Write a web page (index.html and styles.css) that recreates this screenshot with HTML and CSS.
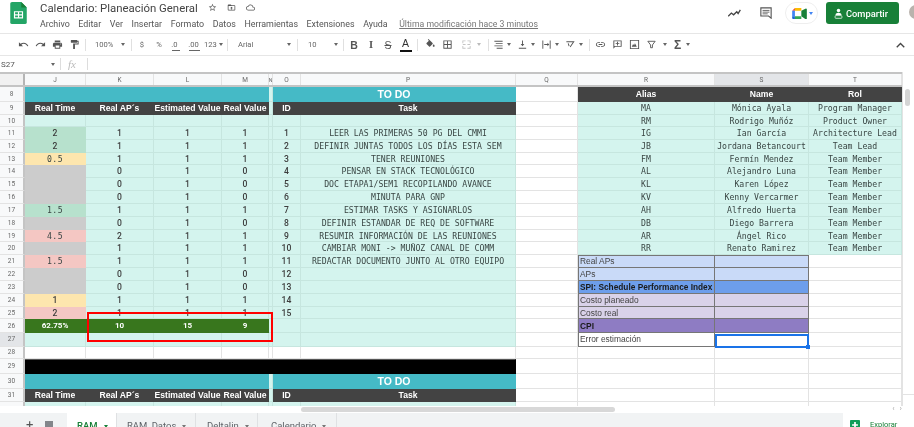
FILE: index.html
```html
<!DOCTYPE html>
<html lang="es">
<head>
<meta charset="utf-8">
<title>Calendario: Planeación General</title>
<link rel="stylesheet" href="styles.css">
</head>
<body>
<div class="app">
  <header class="top">
    <svg class="logo" viewBox="0 0 18 24"><path fill="#23a566" d="M2 0h10l6 6v16a2 2 0 0 1-2 2H2a2 2 0 0 1-2-2V2a2 2 0 0 1 2-2z"/><path fill="#188038" d="M12 0l6 6h-6z"/><path fill="#fff" d="M4 10h10v8H4zm1.300 1.300v2.100h3.100v-2.100zm4.400 0v2.100h3v-2.100zm-4.400 3.300v2.100h3.100v-2.100zm4.400 0v2.100h3v-2.100z" fill-rule="evenodd"/></svg>
    <div class="titles">
      <div class="title-line">
        <span class="doc-title">Calendario: Planeación General</span>
        <svg class="ti first" viewBox="0 0 24 24"><path d="M22 9.240l-7.190-.62L12 2 9.190 8.630 2 9.240l5.460 4.730L5.820 21 12 17.270 18.180 21l-1.630-7.030L22 9.240zM12 15.400l-3.760 2.270 1-4.280-3.320-2.880 4.380-.38L12 6.100l1.710 4.040 4.380.38-3.320 2.880 1 4.280L12 15.400z"/></svg>
        <svg class="ti" viewBox="0 0 24 24"><path d="M20 6h-8l-2-2H4c-1.100 0-2 .9-2 2v12c0 1.100.9 2 2 2h16c1.100 0 2-.9 2-2V8c0-1.100-.9-2-2-2zm0 12H4V8h16v10zM11 17h2v-3h3l-4-4-4 4h3z"/></svg>
        <svg class="ti" viewBox="0 0 24 24"><path d="M19.350 10.040C18.670 6.590 15.640 4 12 4 9.110 4 6.600 5.640 5.350 8.040 2.340 8.360 0 10.910 0 14c0 3.310 2.690 6 6 6h13c2.760 0 5-2.240 5-5 0-2.640-2.050-4.780-4.650-4.960zM19 18H6c-2.210 0-4-1.790-4-4s1.790-4 4-4h.71C7.370 7.690 9.480 6 12 6c3.040 0 5.500 2.460 5.500 5.500v.5H19c1.660 0 3 1.340 3 3s-1.340 3-3 3z"/></svg>
      </div>
      <nav class="menu">
        <span>Archivo</span><span>Editar</span><span>Ver</span><span>Insertar</span><span>Formato</span><span>Datos</span><span>Herramientas</span><span>Extensiones</span><span>Ayuda</span><span class="last-edit">Última modificación hace 3 minutos</span>
      </nav>
    </div>
    <div class="top-actions">
      <svg class="trend" viewBox="0 0 14 10"><path fill="none" stroke="#444" stroke-width="1.500" d="M0 8l3.500-3.500 2.500 2L9.500 3 11 5l2.500-4"/></svg>
      <svg class="chat" viewBox="0 0 14 14"><path fill="none" stroke="#555" stroke-width="1.300" d="M1 1h12v12l-3-2.500H1z"/><path stroke="#555" d="M3 4h8M3 6h8M3 8h6"/></svg>
      <div class="meet">
        <svg viewBox="0 0 16 12" class="meet-icon"><path fill="#ea4335" d="M0 3l3-3v3z"/><path fill="#4285f4" d="M0 3h3v6H0z"/><path fill="#fbbc04" d="M3 0h7v3H3z"/><path fill="#188038" d="M10 3v6l5 3.500a1 1 0 0 0 1-1V1a1 1 0 0 0-1-.5z"/><path fill="#34a853" d="M3 9h7v3H3z"/><path fill="#1967d2" d="M0 9h3v3H1a1 1 0 0 1-1-1z"/></svg>
        <span class="meet-caret"></span>
      </div>
      <button class="share">
        <svg viewBox="0 0 12 14"><circle cx="6" cy="3" r="2.300" fill="#fff"/><path fill="#fff" d="M2 9c0-2 2-3 4-3s4 1 4 3z"/><rect x="1.500" y="9.800" width="9" height="3.600" rx=".8" fill="none" stroke="#fff"/></svg>
        Compartir
      </button>
      <span class="avatar"></span>
    </div>
  </header>

  <div class="toolbar">
    <svg class="i" viewBox="0 0 24 24"><path d="M12.500 8c-2.650 0-5.050.99-6.900 2.600L2 7v9h9l-3.620-3.620c1.390-1.160 3.160-1.880 5.120-1.880 3.540 0 6.550 2.310 7.600 5.500l2.370-.78C21.080 11.030 17.150 8 12.500 8z"/></svg>
    <svg class="i" viewBox="0 0 24 24"><path d="M18.400 10.600C16.550 8.990 14.150 8 11.500 8c-4.650 0-8.580 3.030-9.960 7.220L3.900 16c1.050-3.190 4.050-5.500 7.600-5.500 1.950 0 3.730.72 5.120 1.880L13 16h9V7l-3.600 3.600z"/></svg>
    <svg class="i" viewBox="0 0 24 24"><path d="M19 8H5c-1.660 0-3 1.340-3 3v6h4v4h12v-4h4v-6c0-1.660-1.340-3-3-3zm-3 11H8v-5h8v5zm3-7c-.55 0-1-.45-1-1s.45-1 1-1 1 .45 1 1-.45 1-1 1zm-1-9H6v4h12V3z"/></svg>
    <svg class="i" viewBox="0 0 24 24"><path d="M18 4V3c0-.55-.45-1-1-1H5c-.55 0-1 .45-1 1v4c0 .55.45 1 1 1h12c.55 0 1-.45 1-1V6h1v4H9v11c0 .55.45 1 1 1h2c.55 0 1-.45 1-1v-9h8V4h-3z"/></svg>
    <span class="sep s1"></span>
    <span class="txt w-zoom">100%</span><span class="caret"></span>
    <span class="sep s2"></span>
    <span class="txt w-cur">$</span>
    <span class="txt w-cur">%</span>
    <span class="txt w-dec dec-a">.0<u></u></span>
    <span class="txt w-dec dec-b">.00<u></u></span>
    <span class="txt w-123">123</span><span class="caret c-tight"></span>
    <span class="sep s3"></span>
    <span class="txt w-font">Arial</span><span class="caret"></span>
    <span class="sep s4"></span>
    <span class="txt w-size">10</span><span class="caret"></span>
    <span class="sep s5"></span>
    <b class="fmt f-b">B</b><i class="fmt f-i">I</i><s class="fmt f-s">S</s><span class="fmt f-a">A</span>
    <span class="sep s6"></span>
    <svg class="i fill" viewBox="0 0 24 24"><path d="M16.560 8.940L7.620 0 6.210 1.410l2.380 2.380-5.150 5.150c-.59.59-.59 1.540 0 2.120l5.500 5.500c.29.29.68.44 1.060.44s.77-.15 1.060-.44l5.500-5.500c.59-.58.59-1.530 0-2.120zM19 11.500s-2 2.170-2 3.500c0 1.100.9 2 2 2s2-.9 2-2c0-1.330-2-3.500-2-3.500z"/></svg>
    <svg class="i" viewBox="0 0 24 24"><path d="M3 3v18h18V3H3zm8 16H5v-6h6v6zm0-8H5V5h6v6zm8 8h-6v-6h6v6zm0-8h-6V5h6v6z"/></svg>
    <svg class="i merge" viewBox="0 0 24 24"><path d="M3 3h7v2H5v4H3zm11 0h7v6h-2V5h-5zM3 15h2v4h5v2H3zm16 0h2v6h-7v-2h5zM4 11h6v2H4zm10 0h6v2h-6z"/></svg><span class="caret c-faint"></span>
    <span class="sep s7"></span>
    <svg class="i" viewBox="0 0 24 24"><path d="M3 4h18v2H3zm3 5h15v2H6zM3 14h18v2H3zm5 5h13v2H8z"/></svg><span class="caret c-tight"></span>
    <svg class="i" viewBox="0 0 24 24"><path d="M4 19h16v2H4zM13 3v8h3l-4 5-4-5h3V3z"/></svg><span class="caret c-tight"></span>
    <svg class="i" viewBox="0 0 24 24"><path d="M3 3h2v18H3zm16 0h2v18h-2zM7 11h7V8l4 4-4 4v-3H7z"/></svg><span class="caret c-tight"></span>
    <svg class="i" viewBox="0 0 24 24"><path d="M3 5h18l-9 13-1.600-1.100L17 7H3zM8 9l2 6-2 .6-2-6z"/></svg><span class="caret c-tight"></span>
    <span class="sep s8"></span>
    <svg class="i" viewBox="0 0 24 24"><path d="M3.900 12c0-1.710 1.390-3.100 3.100-3.100h4V7H7c-2.760 0-5 2.240-5 5s2.240 5 5 5h4v-1.900H7c-1.710 0-3.100-1.390-3.100-3.100zM8 13h8v-2H8v2zm9-6h-4v1.900h4c1.710 0 3.100 1.390 3.100 3.100s-1.390 3.100-3.100 3.100h-4V17h4c2.760 0 5-2.240 5-5s-2.240-5-5-5z"/></svg>
    <svg class="i" viewBox="0 0 24 24"><path d="M3 3h18v14H7l-4 4zm2 2v11l1-1h13V5zm6 1h2v3h3v2h-3v3h-2v-3H8V9h3z" fill-rule="evenodd"/></svg>
    <svg class="i" viewBox="0 0 24 24"><path d="M2 2h20v20H2zm2 2v16h16V4zm2 13l3-6 2 3 2-5 4 8z" fill-rule="evenodd"/></svg>
    <svg class="i filter" viewBox="0 0 24 24"><path fill="none" stroke="#555" stroke-width="2" d="M4 5h16l-6 8v6h-4v-6z"/></svg><span class="caret c-gap"></span>
    <span class="sigma">Σ</span><span class="caret c-tight"></span>
    <svg class="collapse" viewBox="0 0 12 8"><path fill="none" stroke="#444" stroke-width="1.800" d="M1 7l5-5 5 5"/></svg>
  </div>

  <div class="formula">
    <span class="cell-name">S27</span><span class="caret name-caret"></span>
    <span class="fsep"></span>
    <span class="fx">fx</span>
    <span class="fsep"></span>
  </div>

  <main class="sheet">
    <div class="grid-area">
      <div class="row heads">
        <div class="corner"></div><div>J</div><div>K</div><div>L</div><div>M</div><div class="n">N</div><div>O</div><div>P</div><div>Q</div><div>R</div><div class="on">S</div><div>T</div>
      </div>
      <div class="cells">
        <div class="row r8"><div class="rh">8</div><div class="teal"></div><div class="teal"></div><div class="teal"></div><div class="teal"></div><div class="mint"></div><div class="teal todo span2">TO DO</div><div class="c"></div><div class="dark">Alias</div><div class="dark">Name</div><div class="dark">Rol</div></div>
        <div class="row r9"><div class="rh">9</div><div class="dark">Real Time</div><div class="dark">Real AP´s</div><div class="dark">Estimated Value</div><div class="dark">Real Value</div><div class="mint"></div><div class="dark">ID</div><div class="dark">Task</div><div class="c"></div><div class="mint mono">MA</div><div class="mint mono">Mónica Ayala</div><div class="mint mono">Program Manager</div></div>
        <div class="row r10"><div class="rh">10</div><div class="mint"></div><div class="mint"></div><div class="mint"></div><div class="mint"></div><div class="mint"></div><div class="mint"></div><div class="mint"></div><div class="c"></div><div class="mint mono">RM</div><div class="mint mono">Rodrigo Muñóz</div><div class="mint mono">Product Owner</div></div>
        <div class="row"><div class="rh">11</div><div class="good num">2</div><div class="mint num">1</div><div class="mint num">1</div><div class="mint num">1</div><div class="mint"></div><div class="mint num">1</div><div class="mint mono">LEER LAS PRIMERAS 50 PG DEL CMMI</div><div class="c"></div><div class="mint mono">IG</div><div class="mint mono">Ian García</div><div class="mint mono">Architecture Lead</div></div>
        <div class="row"><div class="rh">12</div><div class="good num">2</div><div class="mint num">1</div><div class="mint num">1</div><div class="mint num">1</div><div class="mint"></div><div class="mint num">2</div><div class="mint mono">DEFINIR JUNTAS TODOS LOS DÍAS ESTA SEM</div><div class="c"></div><div class="mint mono">JB</div><div class="mint mono">Jordana Betancourt</div><div class="mint mono">Team Lead</div></div>
        <div class="row"><div class="rh">13</div><div class="warn mono wide">0.5</div><div class="mint num">1</div><div class="mint num">1</div><div class="mint num">1</div><div class="mint"></div><div class="mint num">3</div><div class="mint mono">TENER REUNIONES</div><div class="c"></div><div class="mint mono">FM</div><div class="mint mono">Fermín Mendez</div><div class="mint mono">Team Member</div></div>
        <div class="row"><div class="rh">14</div><div class="none"></div><div class="mint num">0</div><div class="mint num">1</div><div class="mint num">0</div><div class="mint"></div><div class="mint num">4</div><div class="mint mono">PENSAR EN STACK TECNOLÓGICO</div><div class="c"></div><div class="mint mono">AL</div><div class="mint mono">Alejandro Luna</div><div class="mint mono">Team Member</div></div>
        <div class="row"><div class="rh">15</div><div class="none"></div><div class="mint num">0</div><div class="mint num">1</div><div class="mint num">0</div><div class="mint"></div><div class="mint num">5</div><div class="mint mono">DOC ETAPA1/SEM1 RECOPILANDO AVANCE</div><div class="c"></div><div class="mint mono">KL</div><div class="mint mono">Karen López</div><div class="mint mono">Team Member</div></div>
        <div class="row"><div class="rh">16</div><div class="none"></div><div class="mint num">0</div><div class="mint num">1</div><div class="mint num">0</div><div class="mint"></div><div class="mint num">6</div><div class="mint mono">MINUTA PARA GNP</div><div class="c"></div><div class="mint mono">KV</div><div class="mint mono">Kenny Vercarmer</div><div class="mint mono">Team Member</div></div>
        <div class="row"><div class="rh">17</div><div class="good mono wide">1.5</div><div class="mint num">1</div><div class="mint num">1</div><div class="mint num">1</div><div class="mint"></div><div class="mint num">7</div><div class="mint mono">ESTIMAR TASKS Y ASIGNARLOS</div><div class="c"></div><div class="mint mono">AH</div><div class="mint mono">Alfredo Huerta</div><div class="mint mono">Team Member</div></div>
        <div class="row"><div class="rh">18</div><div class="none"></div><div class="mint num">0</div><div class="mint num">1</div><div class="mint num">0</div><div class="mint"></div><div class="mint num">8</div><div class="mint mono">DEFINIR ESTANDAR DE REQ DE SOFTWARE</div><div class="c"></div><div class="mint mono">DB</div><div class="mint mono">Diego Barrera</div><div class="mint mono">Team Member</div></div>
        <div class="row"><div class="rh">19</div><div class="bad mono wide">4.5</div><div class="mint num">2</div><div class="mint num">1</div><div class="mint num">1</div><div class="mint"></div><div class="mint num">9</div><div class="mint mono">RESUMIR INFORMACIÓN DE LAS REUNIONES</div><div class="c"></div><div class="mint mono">AR</div><div class="mint mono">Ángel Rico</div><div class="mint mono">Team Member</div></div>
        <div class="row"><div class="rh">20</div><div class="none"></div><div class="mint num">1</div><div class="mint num">1</div><div class="mint num">1</div><div class="mint"></div><div class="mint num">10</div><div class="mint mono">CAMBIAR MONI -&gt; MUÑOZ CANAL DE COMM</div><div class="c"></div><div class="mint mono">RR</div><div class="mint mono">Renato Ramirez</div><div class="mint mono">Team Member</div></div>
        <div class="row"><div class="rh">21</div><div class="bad mono wide">1.5</div><div class="mint num">1</div><div class="mint num">1</div><div class="mint num">1</div><div class="mint"></div><div class="mint num">11</div><div class="mint mono">REDACTAR DOCUMENTO JUNTO AL OTRO EQUIPO</div><div class="c"></div><div class="peri lbl box-top">Real APs</div><div class="peri box-top"></div><div class="c"></div></div>
        <div class="row"><div class="rh">22</div><div class="none"></div><div class="mint num">0</div><div class="mint num">1</div><div class="mint num">0</div><div class="mint"></div><div class="mint num">12</div><div class="mint"></div><div class="c"></div><div class="peri lbl">APs</div><div class="peri"></div><div class="c"></div></div>
        <div class="row"><div class="rh">23</div><div class="none"></div><div class="mint num">0</div><div class="mint num">1</div><div class="mint num">0</div><div class="mint"></div><div class="mint num">13</div><div class="mint"></div><div class="c"></div><div class="blue lbl">SPI: Schedule Performance Index</div><div class="blue"></div><div class="c"></div></div>
        <div class="row"><div class="rh">24</div><div class="warn num">1</div><div class="mint num">1</div><div class="mint num">1</div><div class="mint num">1</div><div class="mint"></div><div class="mint num">14</div><div class="mint"></div><div class="c"></div><div class="lav lbl">Costo planeado</div><div class="lav"></div><div class="c"></div></div>
        <div class="row"><div class="rh">25</div><div class="bad num">2</div><div class="mint num">1</div><div class="mint num">1</div><div class="mint num">1</div><div class="mint"></div><div class="mint num">15</div><div class="mint"></div><div class="c"></div><div class="lav lbl">Costo real</div><div class="lav"></div><div class="c"></div></div>
        <div class="row r26"><div class="rh">26</div><div class="total">62.75%</div><div class="total">10</div><div class="total">15</div><div class="total">9</div><div class="mint"></div><div class="mint"></div><div class="mint"></div><div class="c"></div><div class="purple lbl">CPI</div><div class="purple"></div><div class="c"></div></div>
        <div class="row r27"><div class="rh on">27</div><div class="mint"></div><div class="mint"></div><div class="mint"></div><div class="mint"></div><div class="mint"></div><div class="mint"></div><div class="mint"></div><div class="c"></div><div class="err lbl">Error estimación</div><div class="err"></div><div class="c"></div></div>
        <div class="row r28"><div class="rh">28</div><div class="c"></div><div class="c"></div><div class="c"></div><div class="c"></div><div class="c"></div><div class="c"></div><div class="c"></div><div class="c"></div><div class="c"></div><div class="c"></div><div class="c"></div></div>
        <div class="row r29"><div class="rh">29</div><div class="black"></div><div class="c"></div><div class="c"></div><div class="c"></div><div class="c"></div></div>
        <div class="row r30"><div class="rh">30</div><div class="teal"></div><div class="teal"></div><div class="teal"></div><div class="teal"></div><div class="mint"></div><div class="teal todo span2">TO DO</div><div class="c"></div><div class="c"></div><div class="c"></div><div class="c"></div></div>
        <div class="row r31"><div class="rh">31</div><div class="dark">Real Time</div><div class="dark">Real AP´s</div><div class="dark">Estimated Value</div><div class="dark">Real Value</div><div class="mint"></div><div class="dark">ID</div><div class="dark">Task</div><div class="c"></div><div class="c"></div><div class="c"></div><div class="c"></div></div>
        <div class="row r32"><div class="rh"></div><div class="mint"></div><div class="mint"></div><div class="mint"></div><div class="mint"></div><div class="mint"></div><div class="mint"></div><div class="mint"></div><div class="c"></div><div class="c"></div><div class="c"></div><div class="c"></div></div>
      </div>
      <div class="callout"></div>
      <div class="selected"><span class="handle"></span></div>
    </div>
    <aside class="vscroll"><span class="vthumb"></span><span class="varrows"><i></i><i></i></span></aside>
  </main>

  <div class="hscroll"><span class="hthumb"></span><span class="harrows">‹ ›</span></div>

  <footer class="tabs">
    <span class="add">+</span>
    <svg class="list" viewBox="0 0 12 8"><path fill="#5f6368" d="M0 0h12v2H0zm0 3h12v2H0zm0 3h12v2H0z"/></svg>
    <span class="tab active">RAM<span class="tcaret"></span></span>
    <span class="tab tab-datos">RAM_Datos<span class="tcaret"></span></span>
    <span class="tab tab-delta">Deltalin<span class="tcaret"></span></span>
    <span class="tab tab-cal">Calendario<span class="tcaret"></span></span>
    <span class="explore"><svg viewBox="0 0 12 12"><rect width="12" height="12" rx="1" fill="#0f9d58"/><path fill="#fff" d="M5 2.500h2V5h2.500v2H7v2.500H5V7H2.500V5H5z"/></svg>Explorar</span>
  </footer>
</div>
</body>
</html>
```

FILE: styles.css
```css
* { box-sizing: border-box; }
html, body { margin: 0; padding: 0; background: #fff; }
body { font-family: Roboto, "Liberation Sans", sans-serif; color: #444; }
.app { width: 914px; height: 427px; overflow: hidden; display: flex; flex-direction: column; filter: blur(.4px); }

/* Title bar */
.top { height: 33px; flex: none; display: flex; padding-left: 10px; position: relative; }
.logo { width: 17px; height: 22px; margin-top: 2px; }
.titles { margin-left: 13px; flex: 1; }
.title-line { height: 15px; display: flex; align-items: center; }
.doc-title { font-size: 11.400px; color: #444; width: 157px; white-space: nowrap; }
.ti { width: 9px; height: 9px; margin-left: 10px; fill: #555; }
.ti.first { margin-left: 10.500px; }
.menu { display: flex; font-size: 8.900px; color: #555; height: 18px; align-items: center; white-space: nowrap; gap: 8.600px; }
.last-edit { margin-left: 3px; font-size: 8.700px; text-decoration: underline; color: #777; }
.top-actions { position: absolute; top: 0; right: 0; height: 26px; display: flex; align-items: center; }
.trend { width: 13px; height: 9px; margin-right: 19px; }
.chat { width: 12px; height: 12px; margin-right: 13px; }
.meet { width: 33px; height: 22px; border: 1px solid #eee; border-radius: 11px; display: flex; align-items: center; padding-left: 6px; margin-right: 8px; }
.meet-icon { width: 15px; height: 11px; }
.meet-caret { margin-left: 2px; border: 2px solid transparent; border-top: 3px solid #4285f4; border-bottom: 0; }
.share { width: 73px; height: 22px; background: #188038; color: #fff; border: 0; border-radius: 3px; font: 500 9.300px Roboto, sans-serif; display: flex; align-items: center; justify-content: flex-start; padding: 0 0 0 8px; gap: 3px; margin-right: 15px; }
.share svg { width: 9px; height: 11px; }
.avatar { position: absolute; right: -9px; top: 5px; width: 14px; height: 14px; border-radius: 50%; background: #b9b3ad; }

/* Toolbar */
.toolbar { height: 23px; flex: none; border-top: 1px solid #e6e6e6; border-bottom: 1px solid #e6e6e6; display: flex; align-items: center; padding-left: 14.500px; position: relative; font-size: 7.600px; color: #666; }
.i { width: 11px; height: 11px; fill: #555; margin: 0 3px; flex: none; }
.sep { width: 1px; height: 12px; background: #e0e0e0; flex: none; }
.s1 { margin: 0 9px 0 2.500px; }
.s2 { margin: 0 1.500px 0 1.500px; }
.s3 { margin: 0 10px 0 2px; }
.s4 { margin: 0 10px 0 1.500px; }
.s5 { margin: 0 2px 0 0; }
.s6 { margin: 0 3.500px 0 2.500px; }
.s7 { margin: 0 1px 0 4px; }
.s8 { margin: 0 2px 0 3px; }
.txt { flex: none; white-space: nowrap; }
.w-zoom { width: 21.500px; }
.caret { flex: none; margin: 0 4.500px; width: 4px; height: 3px; border-left: 2px solid transparent; border-right: 2px solid transparent; border-top: 3px solid #666; }
.c-tight { margin: 0 2.500px 0 .5px; }
.c-gap { margin: 0 4.500px 0 3.500px; }
.c-faint { border-top-color: #bbb; margin: 0 2.500px; }
.w-cur { width: 17px; text-align: center; }
.w-dec { position: relative; text-align: center; }
.dec-a { width: 14px; margin-right: 3.500px; }
.dec-b { width: 17px; margin-right: 2px; }
.w-dec u { position: absolute; left: 4px; right: 2px; bottom: -2px; height: 1px; background: #666; }
.w-123 { width: 14px; }
.w-font { width: 44.500px; }
.w-size { width: 21.500px; }
.fmt { width: 17px; text-align: center; font: 700 10.500px "Liberation Sans", sans-serif; color: #555; flex: none; }
.f-i { font-family: "Liberation Serif", serif; }
.f-s { font-weight: 400; }
.f-a { font-weight: 400; color: #333; border-bottom: 2px solid #111; height: 15px; line-height: 13px; margin: 0 3px; width: 12px; }
.merge { fill: #c4c4c4; margin-left: 5px; }
.sigma { font: 700 12px "Liberation Sans", sans-serif; color: #555; flex: none; width: 12px; margin-right: 2px; text-align: center; }
.collapse { position: absolute; right: 9px; top: 8px; width: 9px; height: 6px; }

/* Formula bar */
.formula { height: 16px; flex: none; display: flex; align-items: center; font-size: 8px; color: #555; }
.cell-name { width: 50px; padding-left: 1px; }
.name-caret { margin: 0 0 0 1px; }
.fsep { width: 1px; height: 12px; background: #ddd; margin-left: 5px; }
.fx { font: italic 11px "Liberation Serif", serif; color: #bbb; width: 19px; margin-left: 7px; }
.fx + .fsep { margin-left: 0; }

/* Sheet */
.sheet { flex: none; height: 334px; display: flex; overflow: hidden; }
.grid-area { width: 902px; position: relative; overflow: hidden; }
.cells { height: 319px; overflow: hidden; }
.row { display: grid; grid-template-columns: 25px 61px 68px 68px 47px 4px 28px 215px 62px 137px 94px 93px; height: 12.830px; }
.row > div { display: flex; align-items: center; justify-content: center; white-space: nowrap; overflow: hidden; border-right: 1px solid #e3e3e3; border-bottom: 1px solid #e3e3e3; min-width: 0; }
.heads { height: 15px; border-top: 2px solid #c4c4c4; border-bottom: 2px solid #c4c4c4; background: #f8f9fa; font-size: 6.500px; color: #666; }
.heads > div { border-bottom: 0; }
.heads .corner { border-right: 2px solid #b5b5b5; background: #f1f1f1; }
.heads .n { font-size: 5px; }
.heads .on, .row > .rh.on { background: #e3e5e8; }
.r8 { height: 14.500px; }
.r9 { height: 13.500px; }
.r10 { height: 12px; }
.r26 { height: 13.500px; }
.r27 { height: 14px; }
.r28 { height: 12px; }
.r29 { height: 15px; }
.r30 { height: 15px; }
.r31 { height: 13px; }
.r32 { height: 12px; }
.row > .rh { background: #f8f9fa; font-size: 6.500px; color: #666; border-right: 2px solid #c4c4c4; }
.row > .mint { background: #d4f4ee; border-color: #c6e6df; }
.row > .teal { background: #45bac6; border-color: #45bac6; }
.row > .dark { background: #434343; border-color: #434343; color: #fff; font: 700 8.600px "Liberation Sans", sans-serif; }
.row > .good { background: #b7e1cd; border-color: #b7e1cd; }
.row > .warn { background: #fde6ae; border-color: #fde6ae; }
.row > .bad { background: #f4c7c3; border-color: #f4c7c3; }
.row > .none { background: #cccccc; border-color: #cccccc; }
.row > .black { background: #000; border-color: #000; grid-column: span 7; border-top: 1px solid #555; }
.row > .total { background: #38761d; border-color: #38761d; color: #fff; font: 700 8px Roboto, sans-serif; }
.span2 { grid-column: span 2; }
.row > .todo { color: #fff; font: 700 10.500px "Liberation Sans", sans-serif; }
.num { font: 500 8.600px Roboto, sans-serif; color: #3c3c3c; }
.mono { font: 8.200px "DejaVu Sans Mono", "Liberation Mono", monospace; color: #3a4644; }
.wide { letter-spacing: .4px; }
.lbl { font: 8.400px "Liberation Sans", sans-serif; color: #444; }
.row > .lbl { justify-content: flex-start; padding-left: 2px; box-shadow: inset 1px 0 #767676; }
.row > .peri, .row > .blue, .row > .lav, .row > .purple, .row > .err { border-color: #767676; }
.row > .peri { background: #c9daf8; }
.row > .box-top { box-shadow: inset 0 1px #767676; }
.row > .lbl.box-top { box-shadow: inset 1px 1px #767676; }
.row > .blue { background: #6d9eeb; color: #1a1a1a; font-weight: 700; }
.row > .lav { background: #d9d2e9; }
.row > .purple { background: #8e7cc3; color: #1a1a1a; font-weight: 700; }
.row > .err { background: #fff; }
.row > .blue.lbl { font-size: 8.300px; }
.callout { position: absolute; left: 87px; top: 240px; width: 186px; height: 30px; border: 2px solid #f00; }
.selected { position: absolute; left: 715px; top: 261.500px; width: 94px; height: 14px; border: 2px solid #1a73e8; }
.handle { position: absolute; right: -3px; bottom: -3px; width: 4px; height: 4px; background: #1a73e8; }
.vscroll { flex: 1; border-left: 1px solid #e3e3e3; position: relative; background: #fff; }
.vthumb { position: absolute; left: 2px; top: 17px; width: 5px; height: 17px; background: #d5d5d5; border-radius: 3px; }
.varrows { position: absolute; left: 0; top: 311px; width: 11px; }
.varrows i { display: block; height: 12px; border-bottom: 1px solid #e3e3e3; }

/* Horizontal scrollbar */
.hscroll { height: 7px; flex: none; position: relative; padding: 1px 0 0 301px; background: #fff; }
.hthumb { display: block; width: 314px; height: 5px; background: #d8d8d8; border-radius: 3px; }
.harrows { position: absolute; right: 12px; top: -2px; font-size: 8px; color: #aaa; word-spacing: 3px; }

/* Tabs */
.tabs { flex: 1; background: #f1f3f4; display: flex; align-items: flex-start; font-size: 9.500px; color: #5f6368; position: relative; padding-left: 26px; overflow: hidden; }
.add { font-size: 13px; line-height: 18px; width: 16px; color: #555; padding-top: 3px; }
.list { width: 8px; height: 6px; margin: 8px 14px 0 3px; flex: none; }
.tab { height: 20px; display: flex; padding: 7px 0 0 10px; align-items: flex-start; white-space: nowrap; border-right: 1px solid #dfe1e3; flex: none; }
.tab.active { background: #fff; color: #188038; width: 50px; font-weight: 500; }
.tab-datos { width: 79px; }
.tab-delta { width: 62px; padding-left: 11px; }
.tab-cal { width: 79px; padding-left: 13px; }
.tcaret { margin: 5px 0 0 6px; border: 2px solid transparent; border-top: 3px solid #777; border-bottom: 0; }
.active .tcaret { border-top-color: #188038; }
.explore { position: absolute; right: 0; top: 0; width: 71px; height: 20px; background: #fff; color: #188038; font-size: 7.500px; display: flex; align-items: flex-start; padding: 7px 0 0 7px; gap: 10px; }
.explore svg { width: 10px; height: 10px; flex: none; }
```
